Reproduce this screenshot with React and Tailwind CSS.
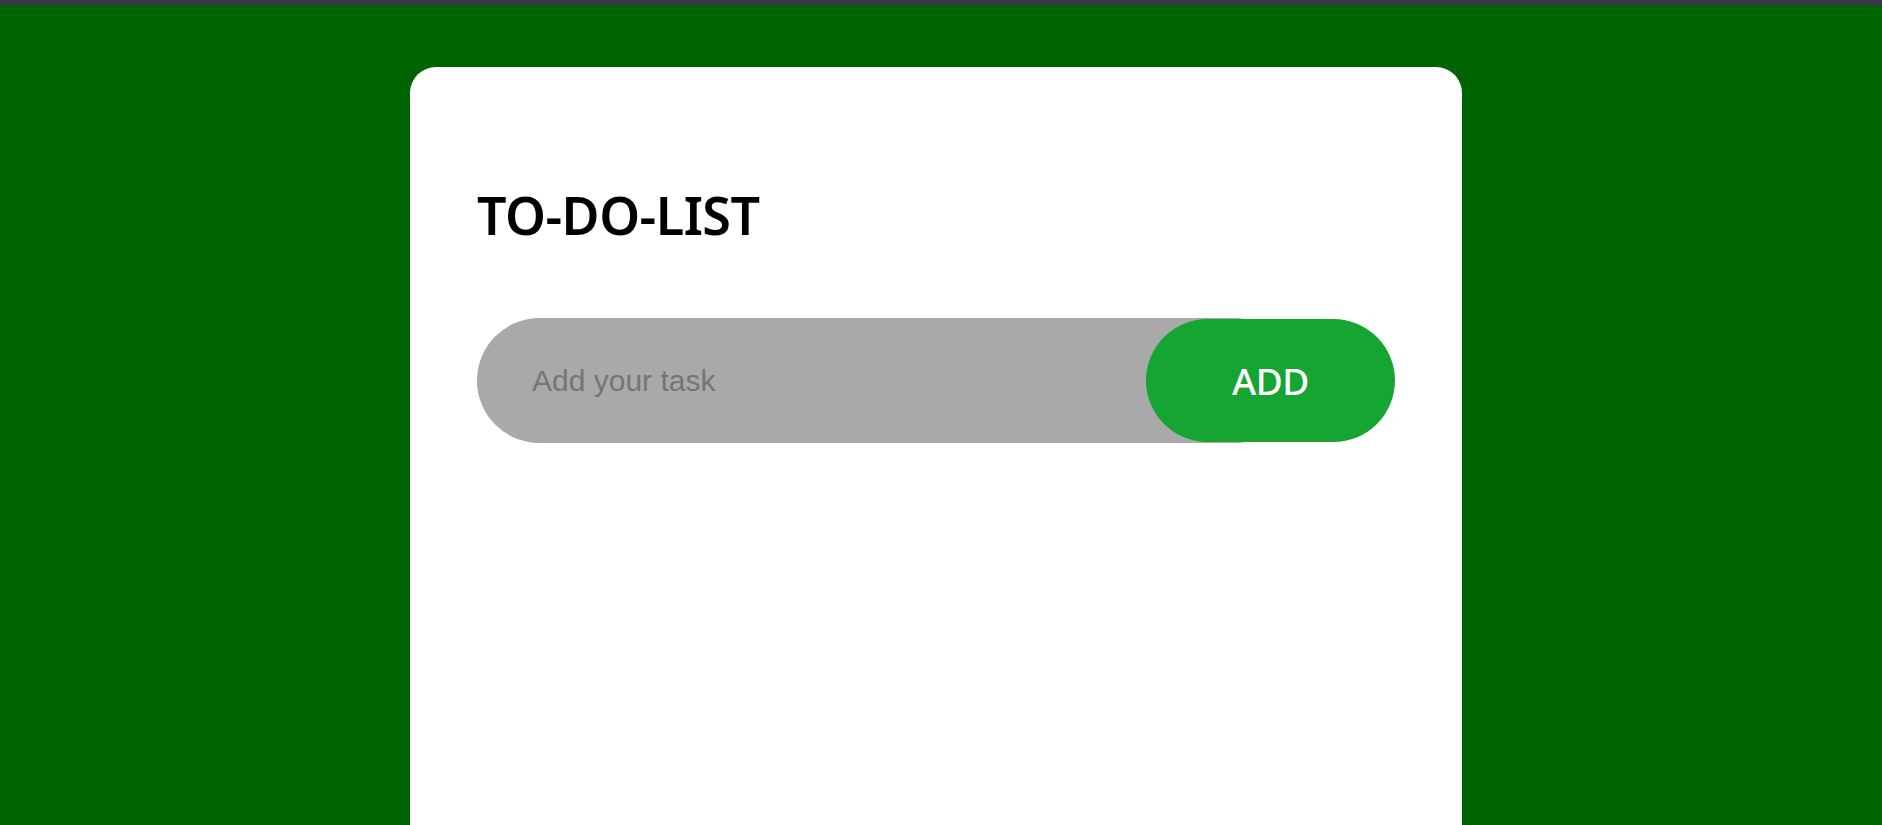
import React, { useState } from 'react';

function App() {
    const [task, setTask] = useState('');

    return (
        <div className="h-screen bg-[#006400] border-t-[5px] border-[#3f3550] overflow-hidden">
            <div className="flex justify-center pr-[10px] pt-[62px]">
                {/* Card */}
                <div className="w-[1052px] h-[800px] bg-white rounded-t-[26px] pl-[67px] pt-[122px]">
                    <h1 className="text-[52px] leading-none font-semibold text-black tracking-[-0.5px] [font-family:'Noto_Sans',sans-serif]">
                        TO-DO-LIST
                    </h1>

                    {/* Input row */}
                    <div className="flex items-center mt-[77px]">
                        <input
                            type="text"
                            autoFocus
                            value={task}
                            onChange={(e) => setTask(e.target.value)}
                            placeholder="Add your task"
                            className="w-[820px] h-[125px] shrink-0 rounded-full bg-[#a9a9a9] pl-[55px] pr-[160px] text-[30px] text-black placeholder:text-[#757575] outline-none [font-family:'Liberation_Sans',Arial,sans-serif]"
                        />
                        <button className="-ml-[151px] w-[249px] h-[123px] shrink-0 rounded-full bg-[#16a432] text-white text-[37px] font-medium tracking-[-0.5px] [font-family:'Noto_Sans',sans-serif] cursor-pointer">
                            ADD
                        </button>
                    </div>
                </div>
            </div>
        </div>
    );
}

export default App;
